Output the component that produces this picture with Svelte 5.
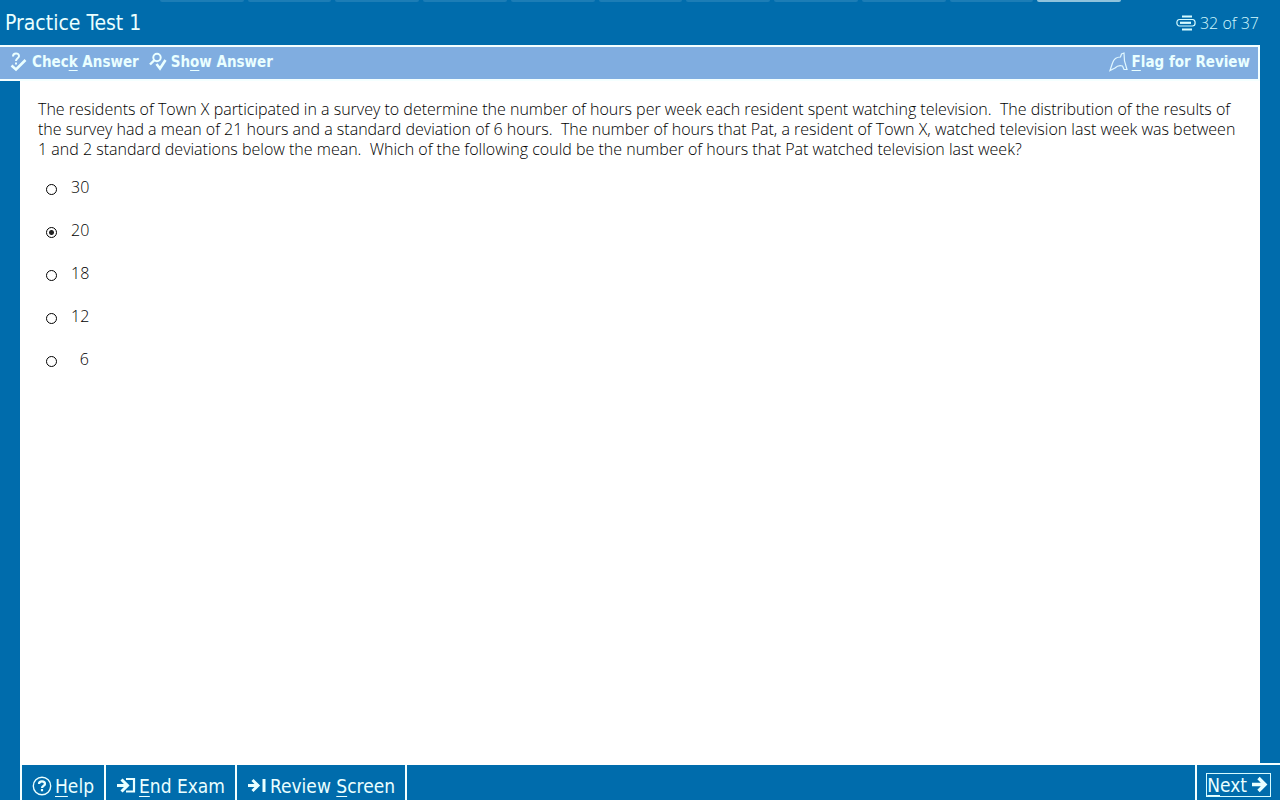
<script lang="ts">
  const question =
    'The residents of Town X participated in a survey to determine the number of hours per week each resident spent watching television.\u00a0 The distribution of the results of the survey had a mean of 21 hours and a standard deviation of 6 hours.\u00a0 The number of hours that Pat, a resident of Town X, watched television last week was between 1 and 2 standard deviations below the mean.\u00a0 Which of the following could be the number of hours that Pat watched television last week?';

  const choices = ['30', '20', '18', '12', '6'];
  const tabs = Array.from({ length: 11 }, (_, i) => i);

  let selected = $state('20');
</script>

<div class="exam">
  <header class="titlebar">
    <div class="tabs" aria-hidden="true">
      {#each tabs as tab}
        <span class="tab" class:current={tab === tabs.length - 1}></span>
      {/each}
    </div>
    <h1>Practice Test 1</h1>
    <div class="progress">
      <svg width="20" height="16" viewBox="0 0 20 16" fill="none" stroke="#d5fbff" aria-hidden="true">
        <path d="M6 1.500H16M6 14.500H16" stroke-width="1.800" />
        <path d="M6 4.500H16.500C20 4.500 20 11 16.500 11H3.500C0 11 0 4.500 3.500 4.500H6" stroke-width="1.200" />
        <path d="M4 7.800H15" stroke-width="2.200" />
      </svg>
      <span>32 of 37</span>
    </div>
  </header>

  <div class="toolbar">
    <button class="tool">
      <svg width="18" height="20" viewBox="0 0 18 20" fill="none" stroke="#eaffff" stroke-width="2" aria-hidden="true">
        <path d="M3 4.500C3 0.500 9 0.500 9 4C9 6.500 6 6 6 9M6 10.500V12.500" />
        <path d="M1.500 13.500L6 17.500L15.500 8" stroke-width="2.600" />
      </svg>
      <span>Chec<u>k</u> Answer</span>
    </button>
    <button class="tool">
      <svg width="18" height="20" viewBox="0 0 18 20" fill="none" stroke="#eaffff" stroke-width="2" aria-hidden="true">
        <circle cx="8" cy="5.500" r="3.700" />
        <path d="M5.500 8L1 12.500" stroke-width="2.400" />
        <path d="M7.500 12L11 16.500L16.500 8" stroke-width="2.600" />
      </svg>
      <span>Sh<u>o</u>w Answer</span>
    </button>
    <button class="tool flag">
      <svg width="19" height="20" viewBox="0 0 19 20" fill="none" stroke="#e0f8ff" stroke-width="1.200" aria-hidden="true">
        <path d="M1 18.500L3.500 11C5 6 8 5 11.500 5L12.500 2L15 1L15.500 9L18 17.500H15L13.500 14C10 13 8 14 6 16L1 18.500Z" />
      </svg>
      <span><u>F</u>lag for Review</span>
    </button>
  </div>

  <main>
    <p id="question">{question}</p>
    <div class="choices" role="radiogroup" aria-labelledby="question">
      {#each choices as choice}
        <label class="choice">
          <input type="radio" name="answer" value={choice} bind:group={selected} />
          <span>{choice}</span>
        </label>
      {/each}
    </div>
  </main>

  <footer>
    <button class="nav">
      <svg width="20" height="20" viewBox="0 0 20 20" fill="none" stroke="#eaffff" aria-hidden="true">
        <circle cx="10" cy="10" r="8.700" stroke-width="1.400" />
        <path d="M7 8C7 4.500 13 4.500 13 8C13 10 10 9.500 10 12M10 13V15.200" stroke-width="2.200" />
      </svg>
      <span><u>H</u>elp</span>
    </button>
    <button class="nav">
      <svg width="20" height="20" viewBox="0 0 20 20" fill="none" stroke="#eaffff" stroke-width="3" aria-hidden="true">
        <path d="M1 9.500H12M5.500 3.500L11.500 9.500L5.500 15.500" />
        <path d="M10 3H18V15.500H10" stroke-width="2.200" />
      </svg>
      <span><u>E</u>nd Exam</span>
    </button>
    <button class="nav">
      <svg width="20" height="20" viewBox="0 0 20 20" fill="none" stroke="#eaffff" stroke-width="3" aria-hidden="true">
        <path d="M1 9.500H11M5.500 4L11 9.500L5.500 15M17 3V16" />
      </svg>
      <span>Review <u>S</u>creen</span>
    </button>
    <button class="nav next">
      <span class="focus">
        <span><u>N</u>ext</span>
        <svg width="17" height="18" viewBox="0 0 17 18" fill="none" stroke="#eaffff" stroke-width="3.400" aria-hidden="true">
          <path d="M1 8.500H14M7.500 2L14 8.500L7.500 15" />
        </svg>
      </span>
    </button>
  </footer>
</div>

<style>
  :global(body) {
    background: #006cac;
  }

  .exam {
    display: flex;
    flex-direction: column;
    min-height: 100vh;
    font-family: 'DejaVu Sans Condensed', 'DejaVu Sans', sans-serif;
    color: #eaffff;
  }

  button {
    border: none;
    background: none;
    color: inherit;
    font: inherit;
    cursor: pointer;
  }

  svg {
    flex-shrink: 0;
  }

  u {
    text-underline-offset: 3px;
    text-decoration-thickness: 1px;
    text-decoration-skip-ink: none;
  }

  .titlebar {
    position: relative;
    display: flex;
    align-items: center;
    justify-content: space-between;
    height: 45px;
    padding: 0 21px 0 5px;
  }

  .tabs {
    position: absolute;
    top: 0;
    left: 160px;
    right: 159px;
    display: flex;
    gap: 4px;
  }

  .tab {
    flex: 1;
    height: 2px;
    background: #1c7db6;
    border-radius: 0 0 4px 4px;
  }

  .tab.current {
    background: #8fc3dc;
  }

  h1 {
    margin: 0;
    font-size: 21px;
    font-weight: 400;
    line-height: 24px;
  }

  .progress {
    display: flex;
    align-items: center;
    gap: 4px;
    font-family: 'Open Sans', sans-serif;
    font-size: 16px;
    font-weight: 300;
    line-height: 20px;
    color: #d5fbff;
  }

  .toolbar {
    display: flex;
    align-items: center;
    gap: 10px;
    height: 32px;
    margin-right: 20px;
    padding: 0 8px 0 10px;
    border: solid #f4ffff;
    border-width: 2px 2px 2px 0;
    background: #80ade0;
    font-size: 15px;
    font-weight: 700;
  }

  .tool {
    display: flex;
    align-items: center;
    gap: 4px;
    padding: 0 0 2px;
  }

  .flag {
    margin-left: auto;
  }

  main {
    flex: 1;
    margin: 0 20px;
    padding: 18px;
    background: #fff;
    color: #000;
    font-family: 'Open Sans', sans-serif;
    font-size: 16px;
    font-weight: 300;
    line-height: 20px;
  }

  p {
    margin: 0;
  }

  .choices {
    display: flex;
    flex-direction: column;
    align-items: flex-start;
    gap: 23px;
    margin-top: 18px;
  }

  .choice {
    display: flex;
    align-items: center;
    gap: 14px;
    padding-left: 8px;
  }

  .choice span {
    min-width: 18px;
    text-align: right;
  }

  input {
    appearance: none;
    width: 11px;
    height: 11px;
    margin: 4px 0 0;
    border: 1px solid #000;
    border-radius: 50%;
    background: #fff;
  }

  input:checked {
    background: radial-gradient(circle, #222 0 2px, #fff 3px);
  }

  footer {
    position: relative;
    display: flex;
    height: 35px;
    margin-left: 20px;
    border-left: 2px solid #f4ffff;
    font-size: 19px;
  }

  /* rule that carries the page edge across the right margin */
  footer::after {
    content: '';
    position: absolute;
    top: -2px;
    right: 0;
    width: 20px;
    height: 2px;
    background: #f4ffff;
  }

  .nav {
    display: flex;
    align-items: center;
    gap: 3px;
    padding: 7px 10px 0;
    border-right: 2px solid #f4ffff;
  }

  .next {
    margin-left: auto;
    padding: 5px 9px 0;
    border-right: none;
    border-left: 2px solid #f4ffff;
  }

  .focus {
    display: flex;
    align-items: center;
    gap: 4px;
    padding: 0 2px 0 0;
    border: 1px solid #d5fbff;
  }
</style>
